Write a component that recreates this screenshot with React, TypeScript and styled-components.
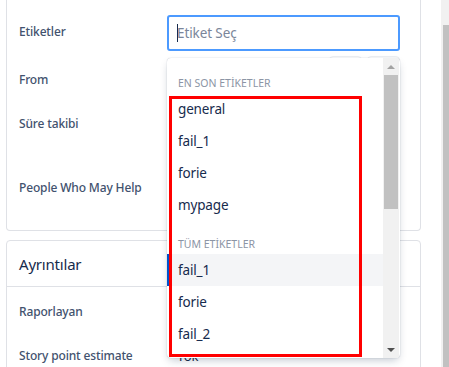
import styled, { createGlobalStyle } from "styled-components";

const Global = createGlobalStyle`
  html, body {
    margin: 0;
    padding: 0;
    background: #ffffff;
    overflow: hidden;
  }
  body {
    font-family: "Noto Sans", "Open Sans", Arial, sans-serif;
  }
`;

const Page = styled.div`
  display: flex;
  width: 449px;
  height: 367px;
  overflow: hidden;
`;
const Main = styled.div`
  flex: 1;
  padding: 0 20px 0 6px;
  display: flex;
  flex-direction: column;
`;
const PageScroll = styled.div`
  width: 8px;
  background: #f1f1f1;
  padding: 25px 0 0 2px;
  box-sizing: border-box;
  display: flex;
`;
const PageThumb = styled.div`
  flex: 1;
  background: #c1c1c1;
`;

const Card = styled.div<{ $top?: boolean }>`
  border: 1px solid #dfe1e6;
  border-top: ${(p) => (p.$top ? "1px solid #dfe1e6" : "none")};
  border-radius: ${(p) => (p.$top ? "4px 4px 0 0" : "0 0 4px 4px")};
  margin-top: ${(p) => (p.$top ? "9px" : "0")};
  padding: ${(p) => (p.$top ? "0" : "15px 0 0 0")};
  flex-shrink: 0;
`;
const CardHeader = styled.div`
  font-size: 15px;
  line-height: 24px;
  color: #172b4d;
  padding: 11px 12px 10px;
  border-bottom: 1px solid #dfe1e6;
  letter-spacing: -0.2px;
`;
const CardBody = styled.div`
  padding-top: 15px;
`;

const Field = styled.div<{ $h: number }>`
  display: grid;
  grid-template-columns: 148px 1fr;
  align-items: start;
  height: ${(p) => p.$h}px;
  padding: 0 20px 0 12px;
`;
const Label = styled.div<{ $pad: number }>`
  font-size: 12px;
  line-height: 20px;
  font-weight: 500;
  color: #42526e;
  padding-top: ${(p) => p.$pad}px;
  white-space: nowrap;
  letter-spacing: -0.15px;
`;
const Value = styled.div`
  position: relative;
  font-size: 13px;
  line-height: 20px;
  color: #172b4d;
`;
const PlainValue = styled.div`
  padding: 0 10px;
`;
const ButtonPair = styled.div`
  display: flex;
  justify-content: flex-end;
  gap: 5px;
`;
const GhostButton = styled.div`
  width: 31px;
  height: 32px;
  border: 1px solid #eceef1;
  border-radius: 4px;
`;

const Input = styled.div`
  height: 36px;
  box-sizing: border-box;
  border: 2px solid #4c9aff;
  border-radius: 3px;
  background: #ffffff;
  display: flex;
  align-items: center;
  padding-left: 8px;
  font-size: 13.5px;
  color: #7a869a;
  letter-spacing: -0.1px;
`;
const Caret = styled.span`
  display: inline-block;
  width: 1px;
  height: 18px;
  background: #172b4d;
  margin-right: -1px;
`;

const Dropdown = styled.div`
  position: absolute;
  top: calc(100% + 7px);
  left: 0;
  width: 233px;
  height: 300px;
  box-sizing: border-box;
  background: #ffffff;
  border-radius: 4px;
  box-shadow: 0 4px 8px -2px rgba(9, 30, 66, 0.25),
    0 0 1px rgba(9, 30, 66, 0.35);
  display: flex;
  overflow: hidden;
  z-index: 5;
`;
const List = styled.div`
  flex: 1;
  padding-top: 2px;
  overflow: hidden;
`;
const GroupHeading = styled.div`
  font-size: 10.5px;
  line-height: 16px;
  color: #8c95a5;
  text-transform: uppercase;
  padding: 15px 11px 2px;
`;
const Option = styled.div<{ $active?: boolean }>`
  height: 32px;
  display: flex;
  align-items: center;
  padding-left: 11px;
  font-size: 13.5px;
  letter-spacing: -0.15px;
  color: #172b4d;
  background: ${(p) => (p.$active ? "#f4f5f7" : "transparent")};
  box-shadow: ${(p) => (p.$active ? "inset 2px 0 0 #0052cc" : "none")};
`;

const ScrollBar = styled.div`
  width: 16px;
  background: #f1f1f1;
  display: flex;
  flex-direction: column;
  align-items: center;
  margin-right: 1px;
`;
const Arrow = styled.div<{ $up?: boolean; $dark?: boolean }>`
  height: 17px;
  display: flex;
  align-items: center;
  justify-content: center;
  &::after {
    content: "";
    border-left: 4px solid transparent;
    border-right: 4px solid transparent;
    ${(p) =>
      p.$up
        ? `border-bottom: 4px solid ${p.$dark ? "#505050" : "#a3a3a3"};`
        : `border-top: 4px solid ${p.$dark ? "#505050" : "#a3a3a3"};`}
  }
`;
const Track = styled.div`
  flex: 1;
  width: 100%;
  padding: 0 1px;
  box-sizing: border-box;
`;
const Thumb = styled.div`
  height: 134px;
  background: #c1c1c1;
`;

const Highlight = styled.div`
  position: absolute;
  left: 2px;
  top: 38px;
  width: 193px;
  height: 261px;
  box-sizing: border-box;
  border: 3px solid #ff0000;
  pointer-events: none;
`;

const recent = ["general", "fail_1", "forie", "mypage"];
const all = ["fail_1", "forie", "fail_2", "mypage", "general"];

export default function App() {
  return (
    <Page>
      <Global />
      <Main>
        <Card>
          <Field $h={41}>
            <Label $pad={7}>Etiketler</Label>
            <Value>
              <Input>
                <Caret />
                Etiket Seç
              </Input>
              <Dropdown>
                <List>
                  <GroupHeading>EN SON ETİKETLER</GroupHeading>
                  {recent.map((t) => (
                    <Option key={"r" + t}>{t}</Option>
                  ))}
                  <GroupHeading>TÜM ETİKETLER</GroupHeading>
                  {all.map((t, i) => (
                    <Option key={"a" + t} $active={i === 0}>
                      {t}
                    </Option>
                  ))}
                </List>
                <ScrollBar>
                  <Arrow $up />
                  <Track>
                    <Thumb />
                  </Track>
                  <Arrow $dark />
                </ScrollBar>
                <Highlight />
              </Dropdown>
            </Value>
          </Field>
          <Field $h={58}>
            <Label $pad={14}>From</Label>
            <Value>
              <ButtonPair>
                <GhostButton />
                <GhostButton />
              </ButtonPair>
            </Value>
          </Field>
          <Field $h={64}>
            <Label $pad={0}>Süre takibi</Label>
            <Value />
          </Field>
          <Field $h={52}>
            <Label $pad={0}>People Who May Help</Label>
            <Value />
          </Field>
        </Card>
        <Card $top>
          <CardHeader>Ayrıntılar</CardHeader>
          <CardBody>
            <Field $h={44}>
              <Label $pad={0}>Raporlayan</Label>
              <Value />
            </Field>
            <Field $h={44}>
              <Label $pad={0}>Story point estimate</Label>
              <Value>
                <PlainValue>Yok</PlainValue>
              </Value>
            </Field>
          </CardBody>
        </Card>
      </Main>
      <PageScroll>
        <PageThumb />
      </PageScroll>
    </Page>
  );
}
